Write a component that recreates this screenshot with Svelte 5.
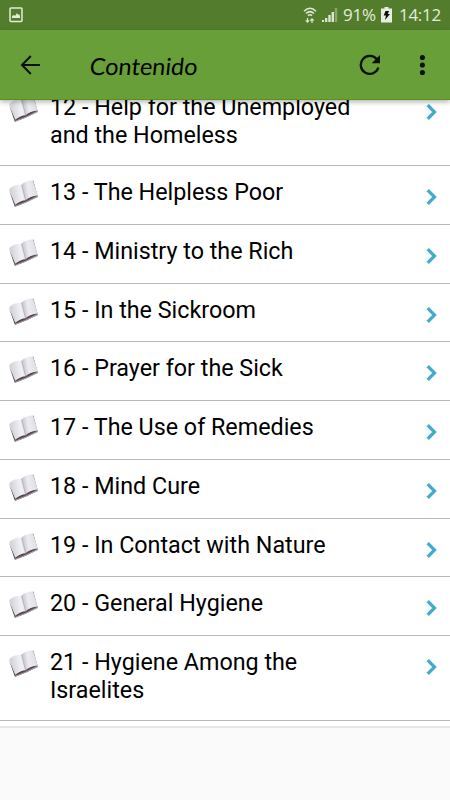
<script>
    let chapters = [
        { number: 12, title: 'Help for the Unemployed and the Homeless' },
        { number: 13, title: 'The Helpless Poor' },
        { number: 14, title: 'Ministry to the Rich' },
        { number: 15, title: 'In the Sickroom' },
        { number: 16, title: 'Prayer for the Sick' },
        { number: 17, title: 'The Use of Remedies' },
        { number: 18, title: 'Mind Cure' },
        { number: 19, title: 'In Contact with Nature' },
        { number: 20, title: 'General Hygiene' },
        { number: 21, title: 'Hygiene Among the Israelites' }
    ];
</script>

<div class="screen">
  <div class="status-bar">
    <svg class="picture" width="14" height="16" viewBox="0 0 14 16">
      <rect x="1" y="1" width="12" height="13.5" rx="1" fill="none" stroke="#e3ecd9" stroke-width="1.5" />
      <path d="M3 11V9l2-1 1 1 2-3 1 2 1-1 1 2v2z" fill="#e3ecd9" />
    </svg>
    <div class="status-right">
      <svg class="wifi" width="14" height="17" viewBox="0 0 14 17" fill="none" stroke="#dfe8d6" stroke-width="1.5">
        <path d="M1 4.2Q7-1.6 13 4.2M3 6.5Q7 2.7 11 6.5M5 8.6Q7 6.8 9 8.6" />
        <path d="M4.5 11v4M2.8 13.3l1.7 1.9 1.7-1.9M9 16v-4M7.3 13.7L9 11.8l1.7 1.9" stroke-width="1.2" />
      </svg>
      <svg class="signal" width="16" height="16" viewBox="0 0 16 16" fill="#dce7d2">
        <path d="M0 13h2v2H0zM3 11h2.300v4H3zM6.300 8h2.400v7H6.300zM9.600 5H12v10H9.600z" />
        <path d="M12.800 1h2.400v14h-2.400z" opacity=".4" />
      </svg>
      <span class="percent">91%</span>
      <svg class="battery" width="11" height="16" viewBox="0 0 11 16">
        <path d="M3.5 0h4v1.500H11V15.500H0V1.500h3.500z" fill="#e7eee0" />
        <path d="M4.500 4h3.500L6.800 7H9l-5 6 1-4.500H2.700z" fill="#0a1203" />
      </svg>
      <span class="clock">14:12</span>
    </div>
  </div>
  <div class="toolbar">
    <svg class="back" width="22" height="20" viewBox="0 0 22 20" fill="none" stroke="#0b1006" stroke-width="2">
      <path d="M21 10H3M11.800 1L3 10l8.800 9" />
    </svg>
    <h1>Contenido</h1>
    <svg class="refresh" width="22" height="22" viewBox="0 0 22 22">
      <path d="M18 5.500A9 9 0 1 0 19.400 13.500" fill="none" stroke="#0b1006" stroke-width="2.300" />
      <path d="M21 1v8.300h-8.300z" fill="#0b1006" />
    </svg>
    <svg class="more" width="6" height="22" viewBox="0 0 6 22" fill="#0b1006">
      <circle cx="3.400" cy="3.500" r="2.550" />
      <circle cx="3.400" cy="11" r="2.550" />
      <circle cx="3.400" cy="18.500" r="2.550" />
    </svg>
  </div>
  <div class="content">
    <ul class="chapters">
      {#each chapters as chapter}
        <li class="chapter">
          <svg class="book" width="30" height="28" viewBox="0 0 30 28">
            <defs>
              <linearGradient id="left-page{chapter.number}" x1="0" x2="1" y1="0.200" y2="0">
                <stop offset="0" stop-color="#cfcfd6" />
                <stop offset=".65" stop-color="#f1f1f5" />
                <stop offset="1" stop-color="#dcdce2" />
              </linearGradient>
              <linearGradient id="right-page{chapter.number}" x1="0" x2="1" y1="0.200" y2="0">
                <stop offset="0" stop-color="#c4c4cc" />
                <stop offset=".35" stop-color="#ececf1" />
                <stop offset="1" stop-color="#d9d9e0" />
              </linearGradient>
            </defs>
            <path d="M.1 10L5.800 26.800 17 22.500l11.800-5.800L24.300.6l-1.500.6 3 13.800-11 4.800-8.500 4.300z" fill="#5d4850" />
            <path d="M.9 10l5.400 15.700 10.200-4 12.100-6 .4 1.300-12.300 5.700-10.200 4z" fill="#a29fad" />
            <path d="M.2 9.200C3.200 5.600 8 4.100 12.600 4.800l4 15.400c-3.600-.1-7 1.200-10.200 4.500z" fill="url(#left-page{chapter.number})" />
            <path d="M12.600 4.800C14.400 2.200 18.500.7 24 .6l4.800 14.800c-4.600.2-9 1.600-12.200 4.800z" fill="url(#right-page{chapter.number})" />
            <path d="M12.600 4.800l4 15.400" fill="none" stroke="#aaa9b6" stroke-width=".8" />
          </svg>
          <span class="title">{chapter.number} - {chapter.title}</span>
          <svg class="chevron" width="12" height="16" viewBox="0 0 12 16" fill="none" stroke="#42aacd" stroke-width="3.200">
            <path d="M1.700 1.200L8.500 8l-6.800 6.800" />
          </svg>
        </li>
      {/each}
    </ul>
  </div>
</div>

<style>
    :global(body) {
        margin: 0;
        background: #fafafa;
    }

    .screen {
        width: 450px;
        height: 800px;
        display: flex;
        flex-direction: column;
        overflow: hidden;
        background: #fafafa;
        font-family: Roboto, sans-serif;
        color: #000000;
    }

    .status-bar {
        height: 30px;
        flex: none;
        box-sizing: border-box;
        padding: 0 9px;
        display: flex;
        align-items: center;
        justify-content: space-between;
        background: #537d2d;
        color: #e3ecd9;
    }

    .status-right {
        display: flex;
        align-items: center;
        font-family: "Open Sans", sans-serif;
        font-size: 17px;
        line-height: 30px;
    }

    .signal {
        margin-left: 5px;
    }

    .percent {
        width: 34px;
        margin-left: 5px;
        letter-spacing: -0.2px;
    }

    .battery {
        margin-left: 4px;
    }

    .clock {
        width: 42px;
        margin-left: 7px;
        letter-spacing: -0.3px;
    }

    .toolbar {
        position: relative;
        z-index: 1;
        height: 70px;
        flex: none;
        box-sizing: border-box;
        padding: 0 25px 0 19px;
        display: flex;
        align-items: center;
        background: #689f38;
        border-bottom: 1px solid #589313;
        box-shadow: 0 2px 5px rgba(0, 0, 0, 0.3);
    }

    h1 {
        flex: 1;
        margin: 2px 0 0 49px;
        font-family: Lato, sans-serif;
        font-size: 23.5px;
        font-weight: 400;
        line-height: 30px;
        transform: skewX(-6deg);
    }

    .more {
        margin-left: 38px;
    }

    .content {
        flex: 1;
        overflow: hidden;
    }

    .chapters {
        list-style: none;
        margin: -19px 0 0;
        padding: 0 0 5px;
        background: #ffffff;
        border-bottom: 2px solid #e6e6e6;
    }

    .chapter {
        box-sizing: border-box;
        min-height: 58.75px;
        display: flex;
        align-items: flex-start;
        padding: 13px 12px 16px 9px;
        border-bottom: 1px solid #b9b9b9;
    }

    .book {
        flex: none;
        margin: 1px 0 -2px;
    }

    .title {
        width: 320px;
        margin-left: 11px;
        font-size: 23.3px;
        line-height: 27.5px;
    }

    .chevron {
        flex: none;
        margin-top: 10px;
        margin-left: auto;
    }
</style>
